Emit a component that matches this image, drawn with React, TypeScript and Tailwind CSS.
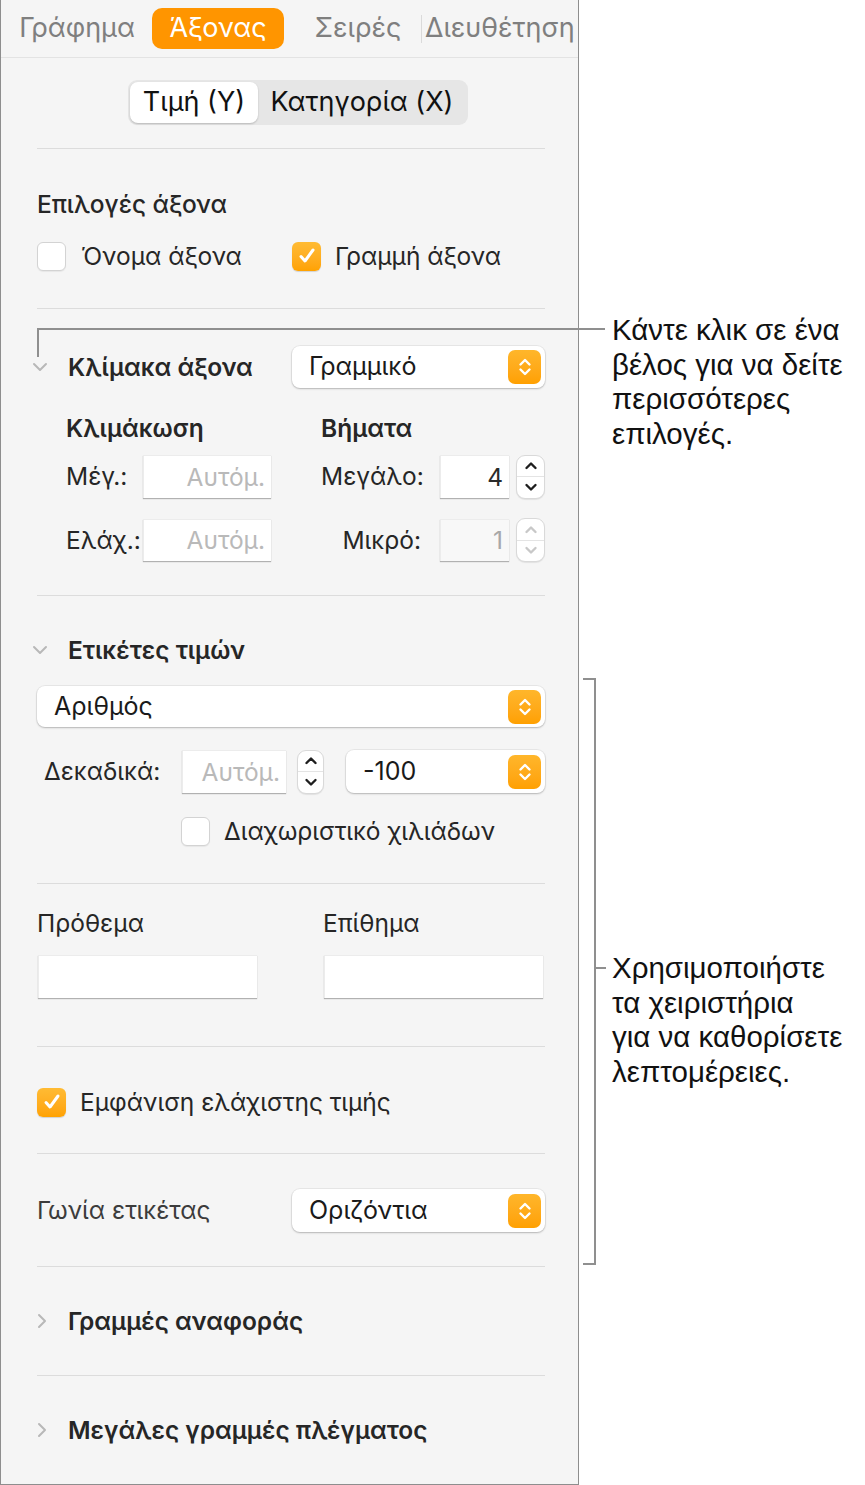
import React from "react";

const UpDown = ({ color = "#ffffff" }: { color?: string }) => (
  <svg width="16" height="24" viewBox="0 0 16 24" fill="none">
    <path d="M3.5 9.5 L8 5 L12.5 9.5" stroke={color} strokeWidth="2.4" strokeLinecap="round" strokeLinejoin="round" />
    <path d="M3.5 14.5 L8 19 L12.5 14.5" stroke={color} strokeWidth="2.4" strokeLinecap="round" strokeLinejoin="round" />
  </svg>
);

function Popup({ label, className }: { label: string; className: string }) {
  return (
    <div
      className={`flex items-center justify-between rounded-[8px] bg-white pl-[17px] pr-[4px] shadow-[0_0_0_1px_rgba(0,0,0,0.05),0_1px_2px_rgba(0,0,0,0.22)] ${className}`}
    >
      <span className="text-[25px] text-[#1a1a1a]">{label}</span>
      <span className="flex h-[34px] w-[33px] items-center justify-center rounded-[7px] bg-gradient-to-b from-[#ffb62a] to-[#ffa000]">
        <UpDown />
      </span>
    </div>
  );
}

function Checkbox({ checked }: { checked?: boolean }) {
  if (checked) {
    return (
      <span className="flex h-[29px] w-[29px] shrink-0 items-center justify-center rounded-[6px] bg-gradient-to-b from-[#ffbb33] to-[#ffa200] shadow-[0_1px_1px_rgba(0,0,0,0.15)]">
        <svg width="20" height="20" viewBox="0 0 20 20" fill="none">
          <path d="M4 10.5 L8 15 L16 4" stroke="#ffffff" strokeWidth="3" strokeLinecap="round" strokeLinejoin="round" />
        </svg>
      </span>
    );
  }
  return (
    <span className="h-[29px] w-[29px] shrink-0 rounded-[6px] border border-[#d3d3d3] bg-white shadow-[0_1px_1px_rgba(0,0,0,0.06)]" />
  );
}

function Stepper({ disabled, className = "" }: { disabled?: boolean; className?: string }) {
  const c = disabled ? "#c8c8c8" : "#1e1e1e";
  return (
    <span
      className={`flex h-[44px] flex-col overflow-hidden rounded-[9px] border border-[#d9d9d9] bg-white shadow-[0_1px_1px_rgba(0,0,0,0.08)] ${className}`}
    >
      <span className="flex flex-1 items-center justify-center border-b border-[#e4e4e4]">
        <svg width="14" height="9" viewBox="0 0 14 9" fill="none">
          <path d="M2.5 7 L7 2.5 L11.5 7" stroke={c} strokeWidth="2.4" strokeLinecap="round" strokeLinejoin="round" />
        </svg>
      </span>
      <span className="flex flex-1 items-center justify-center">
        <svg width="14" height="9" viewBox="0 0 14 9" fill="none">
          <path d="M2.5 2 L7 6.5 L11.5 2" stroke={c} strokeWidth="2.4" strokeLinecap="round" strokeLinejoin="round" />
        </svg>
      </span>
    </span>
  );
}

function Field({ value, placeholder, disabled, className }: { value?: string; placeholder?: string; disabled?: boolean; className: string }) {
  return (
    <span
      className={`flex items-center justify-end pr-[6px] text-[24.5px] ${
        disabled ? "bg-[#f8f8f8] text-[#a8a8a8]" : "bg-white text-[#2a2a2a]"
      } border-l border-t border-[#ececec] shadow-[0_1px_1px_rgba(0,0,0,0.28)] ${className}`}
    >
      {value ?? <span className="text-[#b9b9b9]">{placeholder}</span>}
    </span>
  );
}

const ChevronDown = () => (
  <svg width="16" height="10" viewBox="0 0 16 10" fill="none">
    <path d="M2 2 L8 8 L14 2" stroke="#b8b8b8" strokeWidth="2" strokeLinecap="round" strokeLinejoin="round" />
  </svg>
);

const ChevronRight = () => (
  <svg width="10" height="16" viewBox="0 0 10 16" fill="none">
    <path d="M2 2 L8 8 L2 14" stroke="#b8b8b8" strokeWidth="2" strokeLinecap="round" strokeLinejoin="round" />
  </svg>
);

export default function App() {
  return (
    <div className="relative flex h-[1485px] w-[865px] bg-white font-['Inter',sans-serif] text-[#262626]">
      <div className="flex h-[1485px] w-[579px] shrink-0 flex-col border-x border-b border-[#8e8e8e] bg-[#f5f5f5]">
        {/* tabs */}
        <div className="flex h-[58px] items-center overflow-hidden whitespace-nowrap border-b border-[#e3e3e3] pl-[13px] text-[27px] text-[#7f7f7f]">
          <span className="w-[126px] text-center">Γράφημα</span>
          <span className="ml-[12px] flex h-[41px] w-[132px] items-center justify-center rounded-[10px] bg-[#ff9500] text-white">
            Άξονας
          </span>
          <span className="ml-[12px] w-[124px] text-center">Σειρές</span>
          <span className="ml-[1px] h-[28px] w-px bg-[#dadada]" />
          <span className="ml-[3px]">Διευθέτηση</span>
        </div>

        {/* segmented */}
        <div className="h-[90px] pl-[127px] pt-[22px]">
          <div className="flex h-[45px] w-[340px] rounded-[9px] bg-[#e6e6e6] p-[2px] text-[27px] text-[#111]">
            <span className="flex w-[128px] items-center justify-center rounded-[8px] bg-white shadow-[0_1px_2px_rgba(0,0,0,0.2)]">
              Τιμή (Υ)
            </span>
            <span className="flex flex-1 items-center justify-center">Κατηγορία (X)</span>
          </div>
        </div>

        <div className="flex flex-col pl-[36px] pr-[33px] text-[24.5px]">
          {/* axis options */}
          <div className="h-[160px] border-t border-[#dcdcdc] pt-[41px]">
            <div className="h-[28px] font-medium leading-[28px]">Επιλογές άξονα</div>
            <div className="mt-[23px] flex h-[30px] items-center">
              <Checkbox />
              <span className="ml-[15px] w-[211px]">Όνομα άξονα</span>
              <Checkbox checked />
              <span className="ml-[14px]">Γραμμή άξονα</span>
            </div>
          </div>

          {/* axis scale */}
          <div className="h-[287px] border-t border-[#dcdcdc] pt-[37px]">
            <div className="flex h-[42px] items-center">
              <span className="-ml-[5px] w-[36px]">
                <ChevronDown />
              </span>
              <span className="flex-1 font-semibold">Κλίμακα άξονα</span>
              <Popup label="Γραμμικό" className="h-[42px] w-[253px]" />
            </div>
            <div className="ml-[29px] mt-[22px] grid h-[28px] grid-cols-[255px_1fr] items-center font-semibold">
              <span>Κλιμάκωση</span>
              <span>Βήματα</span>
            </div>
            <div className="ml-[29px] mt-[17px] flex h-[43px] items-center">
              <span className="w-[77px]">Μέγ.:</span>
              <Field placeholder="Αυτόμ." className="h-[43px] w-[128px]" />
              <span className="ml-[50px] w-[119px]">Μεγάλο:</span>
              <Field value="4" className="h-[43px] w-[69px]" />
              <Stepper className="ml-[7px] w-[29px]" />
            </div>
            <div className="ml-[29px] mt-[21px] flex h-[42px] items-center">
              <span className="w-[77px]">Ελάχ.:</span>
              <Field placeholder="Αυτόμ." className="h-[42px] w-[128px]" />
              <span className="ml-[50px] w-[100px] text-right">Μικρό:</span>
              <span className="w-[19px]" />
              <Field value="1" disabled className="h-[42px] w-[69px] shadow-[0_1px_1px_rgba(0,0,0,0.1)]" />
              <Stepper disabled className="ml-[7px] w-[29px]" />
            </div>
          </div>

          {/* value labels */}
          <div className="h-[288px] border-t border-[#dcdcdc] pt-[40px]">
            <div className="flex h-[28px] items-center">
              <span className="-ml-[5px] w-[36px]">
                <ChevronDown />
              </span>
              <span className="font-semibold">Ετικέτες τιμών</span>
            </div>
            <Popup label="Αριθμός" className="mt-[22px] h-[41px] w-full" />
            <div className="mt-[23px] flex h-[43px] items-center">
              <span className="ml-[7px] w-[138px]">Δεκαδικά:</span>
              <Field placeholder="Αυτόμ." className="h-[43px] w-[104px]" />
              <Stepper className="ml-[11px] w-[27px]" />
              <Popup label="-100" className="ml-[22px] h-[43px] flex-1" />
            </div>
            <div className="ml-[144px] mt-[23px] flex h-[30px] items-center">
              <Checkbox />
              <span className="ml-[14px]">Διαχωριστικό χιλιάδων</span>
            </div>
          </div>

          {/* prefix / suffix */}
          <div className="h-[163px] border-t border-[#dcdcdc] pt-[21px]">
            <div className="grid h-[28px] grid-cols-[286px_1fr] items-center">
              <span>Πρόθεμα</span>
              <span>Επίθημα</span>
            </div>
            <div className="mt-[22px] flex h-[43px] pl-px">
              <Field className="h-[43px] w-[219px]" />
              <Field className="ml-[67px] h-[43px] w-[219px]" />
            </div>
          </div>

          {/* show minimum */}
          <div className="h-[107px] border-t border-[#dcdcdc] pt-[40px]">
            <div className="flex h-[30px] items-center">
              <Checkbox checked />
              <span className="ml-[14px]">Εμφάνιση ελάχιστης τιμής</span>
            </div>
          </div>

          {/* label angle */}
          <div className="h-[113px] border-t border-[#dcdcdc] pt-[35px]">
            <div className="flex h-[43px] items-center justify-between">
              <span className="text-[#3c3c3c]">Γωνία ετικέτας</span>
              <Popup label="Οριζόντια" className="h-[43px] w-[253px]" />
            </div>
          </div>

          {/* reference lines */}
          <div className="h-[109px] border-t border-[#dcdcdc] pt-[40px]">
            <div className="flex h-[28px] items-center">
              <span className="w-[31px]">
                <ChevronRight />
              </span>
              <span className="font-semibold">Γραμμές αναφοράς</span>
            </div>
          </div>

          {/* major gridlines */}
          <div className="h-[109px] border-t border-[#dcdcdc] pt-[40px]">
            <div className="flex h-[28px] items-center">
              <span className="w-[31px]">
                <ChevronRight />
              </span>
              <span className="font-semibold">Μεγάλες γραμμές πλέγματος</span>
            </div>
          </div>
        </div>
      </div>

      {/* callout texts */}
      <div className="flex flex-col whitespace-nowrap pl-[33px] font-['Liberation_Sans',sans-serif] text-[29.5px] leading-[34.7px] text-[#111]">
        <p className="mt-[313px]">
          Κάντε κλικ σε ένα
          <br />
          βέλος για να δείτε
          <br />
          περισσότερες
          <br />
          επιλογές.
        </p>
        <p className="mt-[499px]">
          Χρησιμοποιήστε
          <br />
          τα χειριστήρια
          <br />
          για να καθορίσετε
          <br />
          λεπτομέρειες.
        </p>
      </div>

      {/* callout lines */}
      <div className="absolute left-[37px] top-[328px] h-[2px] w-[568px] bg-[#8f8f8f]" />
      <div className="absolute left-[37px] top-[328px] h-[29px] w-[2px] bg-[#8f8f8f]" />
      <div className="absolute left-[594px] top-[678px] h-[587px] w-[2px] bg-[#8f8f8f]" />
      <div className="absolute left-[583px] top-[678px] h-[2px] w-[12px] bg-[#8f8f8f]" />
      <div className="absolute left-[583px] top-[1263px] h-[2px] w-[12px] bg-[#8f8f8f]" />
      <div className="absolute left-[594px] top-[967px] h-[2px] w-[12px] bg-[#8f8f8f]" />
    </div>
  );
}
